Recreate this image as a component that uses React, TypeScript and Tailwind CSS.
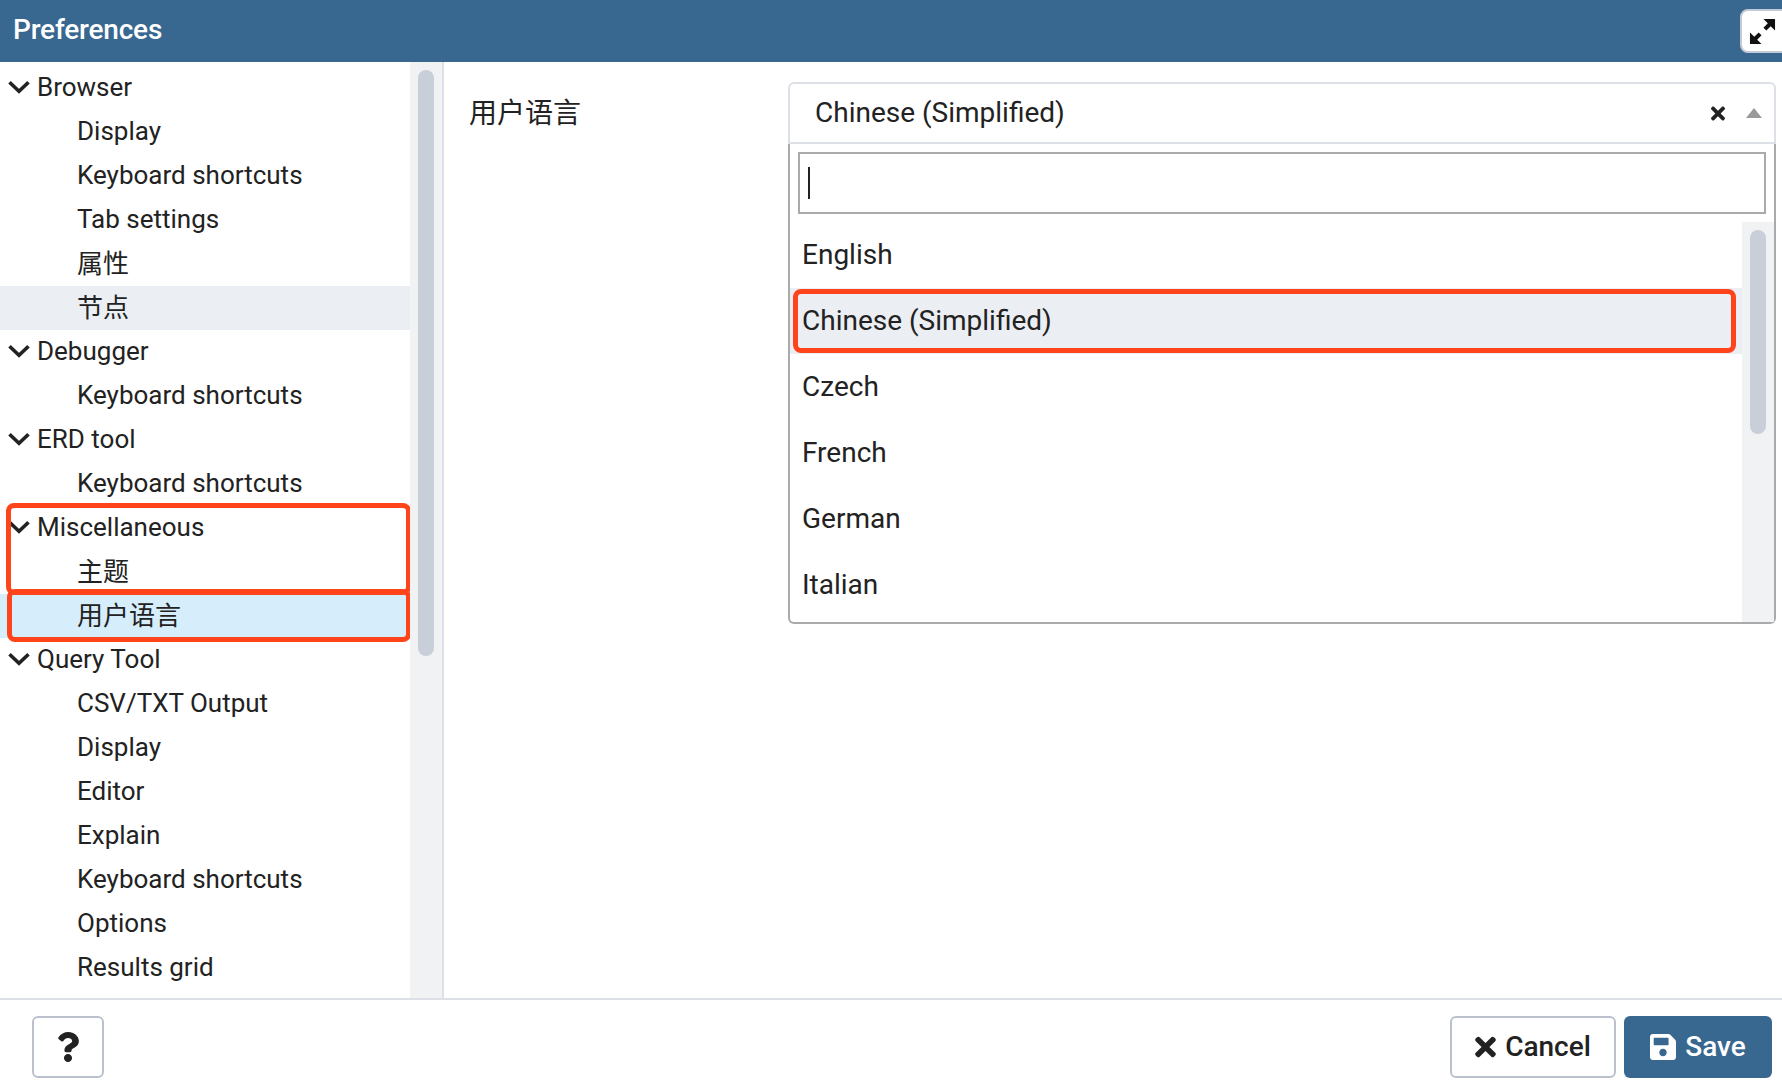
import React from 'react';
import { FaTimes, FaSave, FaQuestion } from 'react-icons/fa';

const fontStack = "font-['Roboto','Noto_Sans_CJK_SC',sans-serif]";

type TreeRow = { label: string; group?: boolean; cjk?: boolean; state?: 'hover' | 'active' };

const treeRows: TreeRow[] = [
  { label: 'Browser', group: true },
  { label: 'Display' },
  { label: 'Keyboard shortcuts' },
  { label: 'Tab settings' },
  { label: '属性', cjk: true },
  { label: '节点', cjk: true, state: 'hover' },
  { label: 'Debugger', group: true },
  { label: 'Keyboard shortcuts' },
  { label: 'ERD tool', group: true },
  { label: 'Keyboard shortcuts' },
  { label: 'Miscellaneous', group: true },
  { label: '主题', cjk: true },
  { label: '用户语言', cjk: true, state: 'active' },
  { label: 'Query Tool', group: true },
  { label: 'CSV/TXT Output' },
  { label: 'Display' },
  { label: 'Editor' },
  { label: 'Explain' },
  { label: 'Keyboard shortcuts' },
  { label: 'Options' },
  { label: 'Results grid' },
];

const languages = ['English', 'Chinese (Simplified)', 'Czech', 'French', 'German', 'Italian'];

const Chevron = () => (
  <svg viewBox="0 0 22 14" className="h-[14px] w-[22px] shrink-0" fill="none" stroke="#222222" strokeWidth="3.6">
    <path d="M1.5 2.2 L11 11.2 L20.5 2.2" />
  </svg>
);

const ExpandIcon = () => (
  <svg viewBox="0 0 28 28" className="h-[27px] w-[27px]" fill="#111111">
    <path d="M15 1 H27 V13 L22.5 8.5 L18 13 L15 10 L19.5 5.5 Z" />
    <path d="M1 15 V27 H13 L8.5 22.5 L13 18 L10 15 L5.5 19.5 L1 15 Z" />
  </svg>
);

const Tree = () => (
  <div className="relative flex-1 overflow-hidden pt-1">
    {treeRows.map((row, i) => (
      <div
        key={i}
        className={`flex h-11 items-center text-[26px] ${row.cjk ? '' : 'pb-[2px]'} ${row.group ? 'gap-[7px] pl-[8px]' : 'pl-[77px]'} ${
          row.state === 'hover' ? 'bg-[#ebeef3]' : row.state === 'active' ? 'bg-[#d6eefb]' : ''
        }`}
      >
        {row.group && <Chevron />}
        <span>{row.label}</span>
      </div>
    ))}
    {/* annotation boxes drawn on the screenshot */}
    <div className="absolute left-[6px] top-[441px] h-[92px] w-[405px] rounded-[8px] border-[5px] border-[#ff441c]" />
    <div className="absolute left-[7px] top-[527px] h-[53px] w-[404px] rounded-[8px] border-[5px] border-[#ff441c]" />
  </div>
);

const LanguageSelect = () => (
  <div className="flex w-[988px] flex-col">
    <div className="flex h-[62px] items-center rounded-t-[6px] border-2 border-[#dde0e6] pl-[25px] pr-[12px]">
      <span className="flex-1 text-[28px]">Chinese (Simplified)</span>
      <FaTimes className="mr-[21px] h-[21px] w-[14px] text-[#222222]" />
      <div className="h-0 w-0 border-x-[8px] border-b-[10px] border-x-transparent border-b-[#999999]" />
    </div>
    <div className="flex h-[480px] flex-col rounded-b-[6px] border-x-2 border-b-2 border-[#aaaaaa]">
      <div className="px-2 pt-2">
        <div className="flex h-[62px] items-center border-2 border-[#aaaaaa] pl-2">
          <div className="h-8 w-[2px] bg-[#222222]" />
        </div>
      </div>
      <div className="mt-2 flex min-h-0 flex-1">
        <div className="relative flex-1">
          {languages.map((lang) => (
            <div
              key={lang}
              className={`flex h-[66px] items-center pl-[12px] text-[28px] ${
                lang === 'Chinese (Simplified)' ? 'bg-[#ebeef3]' : ''
              }`}
            >
              {lang}
            </div>
          ))}
          <div className="absolute left-[3px] right-[6px] top-[67px] h-[64px] rounded-[8px] border-[5px] border-[#ff441c]" />
        </div>
        <div className="w-8 bg-[#f1f2f4] px-2 pt-2">
          <div className="h-[204px] rounded-full bg-[#c8cfd9]" />
        </div>
      </div>
    </div>
  </div>
);

export default function App() {
  return (
    <div className={`flex h-[1082px] w-[1782px] flex-col overflow-hidden bg-white text-[#222222] ${fontStack}`}>
      <header className="flex h-[62px] shrink-0 items-center justify-between bg-[#38678f] pb-[3px] pl-[13px]">
        <span className="text-[28px] font-medium tracking-[-0.2px] text-white">Preferences</span>
        <button className="-mr-2 mt-[3px] flex h-[44px] w-[50px] items-center justify-start rounded-[8px] border-2 border-[#c5cbd6] bg-white pl-[7px]">
          <ExpandIcon />
        </button>
      </header>

      <main className="flex min-h-0 flex-1">
        <aside className="flex w-[444px] shrink-0 border-r-2 border-[#dde0e6]">
          <Tree />
          <div className="w-8 shrink-0 bg-[#f1f2f4] px-2 pt-2">
            <div className="h-[586px] rounded-full bg-[#c8cfd9]" />
          </div>
        </aside>
        <section className="flex min-w-0 flex-1 pl-[25px] pt-5">
          <label className="flex h-[62px] w-[319px] shrink-0 items-center pt-[2px] text-[28px]">用户语言</label>
          <LanguageSelect />
        </section>
      </main>

      <footer className="flex h-[84px] shrink-0 items-start justify-between border-t-2 border-[#dde0e6] pl-8 pr-[10px] pt-[16px]">
        <button className="flex h-[62px] w-[72px] items-center justify-center rounded-[6px] border-2 border-[#bac1cd]">
          <FaQuestion className="h-[30px] w-[24px] text-[#222222]" />
        </button>
        <div className="flex gap-2">
          <button className="flex h-[62px] w-[166px] items-center justify-center gap-[9px] rounded-[6px] border-2 border-[#bac1cd] text-[28px] font-medium">
            <FaTimes className="h-[30px] w-[21px]" />
            Cancel
          </button>
          <button className="flex h-[62px] w-[148px] items-center justify-center gap-[9px] rounded-[6px] bg-[#38678f] text-[28px] font-medium text-white">
            <FaSave className="h-[30px] w-[26px]" />
            Save
          </button>
        </div>
      </footer>
    </div>
  );
}
